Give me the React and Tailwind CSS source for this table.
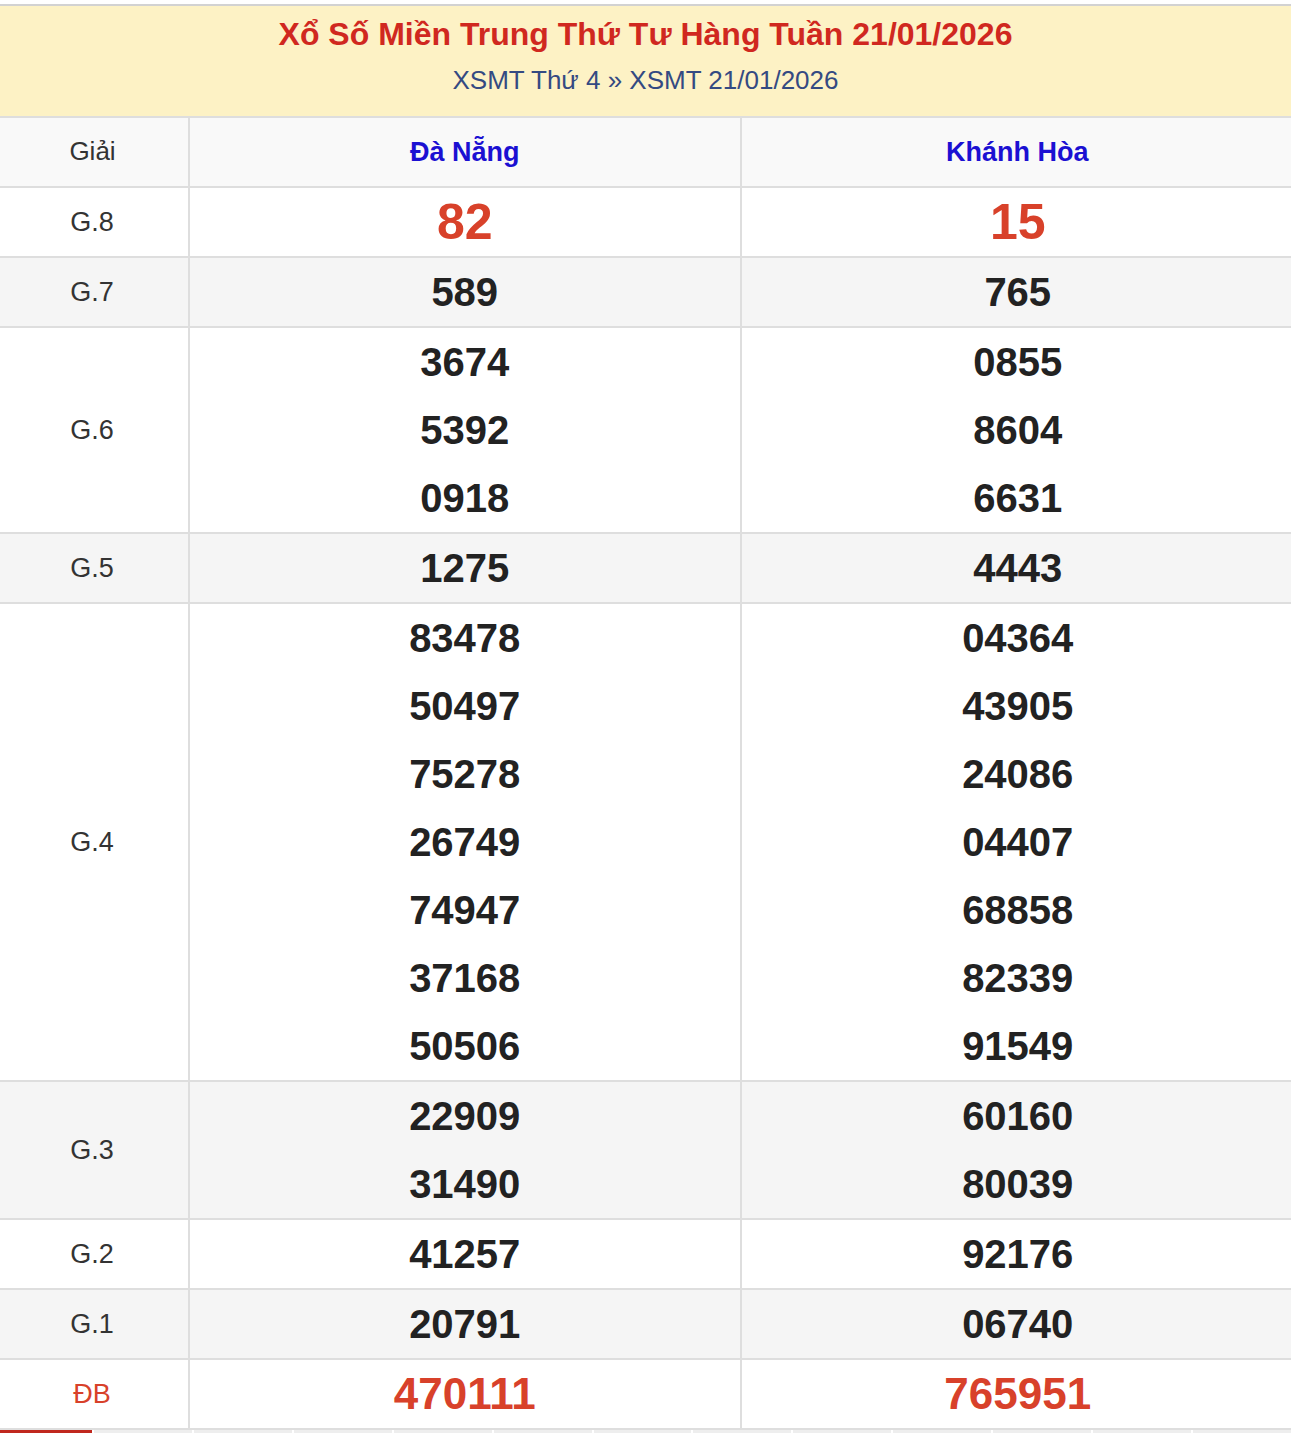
const FONT = { fontFamily: '"Liberation Sans", Arial, sans-serif' };

const prizes = [
  { label: 'G.8', a: ['82'], b: ['15'], kind: 'g8' },
  { label: 'G.7', a: ['589'], b: ['765'] },
  { label: 'G.6', a: ['3674', '5392', '0918'], b: ['0855', '8604', '6631'] },
  { label: 'G.5', a: ['1275'], b: ['4443'] },
  {
    label: 'G.4',
    a: ['83478', '50497', '75278', '26749', '74947', '37168', '50506'],
    b: ['04364', '43905', '24086', '04407', '68858', '82339', '91549'],
  },
  { label: 'G.3', a: ['22909', '31490'], b: ['60160', '80039'] },
  { label: 'G.2', a: ['41257'], b: ['92176'] },
  { label: 'G.1', a: ['20791'], b: ['06740'] },
  { label: 'ĐB', a: ['470111'], b: ['765951'], kind: 'db' },
];

function Numbers({ list, kind }) {
  const cls =
    kind === 'g8'
      ? 'text-[50px] text-[#d8412a]'
      : kind === 'db'
      ? 'text-[44px] text-[#d8412a]'
      : 'text-[40px] text-[#222]';
  return (
    <div className="flex flex-col">
      {list.map((n, i) => (
        <div key={i} className={`h-[68px] flex items-center justify-center font-bold leading-none ${cls}`}>
          {n}
        </div>
      ))}
    </div>
  );
}

export default function App() {
  return (
    <div className="w-[1291px] bg-white pt-[4px]" style={FONT}>
      <div className="border-t-2 border-[#d2d2d2] bg-[#fdf2c5] h-[112px] flex flex-col items-center pt-[8px]">
        <h1 className="text-[32px] leading-[40px] font-bold text-[#d0281f]">
          Xổ Số Miền Trung Thứ Tư Hàng Tuần 21/01/2026
        </h1>
        <div className="mt-[9px] text-[26px] leading-[34px] text-[#344a82]">
          XSMT Thứ 4 » XSMT 21/01/2026
        </div>
      </div>

      <div className="grid grid-cols-[188px_1fr_1fr] gap-[2px] bg-[#dedede] py-[2px]">
        <div className="bg-[#f9f9f9] h-[68px] flex items-center justify-center pr-[3px] pb-[2px] text-[26px] text-[#333]">Giải</div>
        <div className="bg-[#f9f9f9] h-[68px] flex items-center justify-center text-[27px] font-bold text-[#1b10d2]">Đà Nẵng</div>
        <div className="bg-[#f9f9f9] h-[68px] flex items-center justify-center pl-[2px] text-[27px] font-bold text-[#1b10d2]">Khánh Hòa</div>

        {prizes.map((p, i) => {
          const bg = i % 2 === 1 ? 'bg-[#f5f5f5]' : 'bg-white';
          return [
            <div
              key={p.label + 'l'}
              className={`${bg} flex items-center justify-center pr-[4px] text-[27px] ${p.kind === 'db' ? 'text-[#d8412a]' : 'text-[#333]'}`}
            >
              {p.label}
            </div>,
            <div key={p.label + 'a'} className={bg}>
              <Numbers list={p.a} kind={p.kind} />
            </div>,
            <div key={p.label + 'b'} className={`${bg} pl-[3px]`}>
              <Numbers list={p.b} kind={p.kind} />
            </div>,
          ];
        })}
      </div>

      <div className="flex gap-[2px] h-[12px]">
        <div className="w-[92px] border-t-[3px] border-[#c0281e] bg-[#eeeeee]" />
        {Array.from({ length: 12 }).map((_, i) => (
          <div key={i} className="w-[98px] bg-[#eeeeee]" />
        ))}
      </div>
    </div>
  );
}
